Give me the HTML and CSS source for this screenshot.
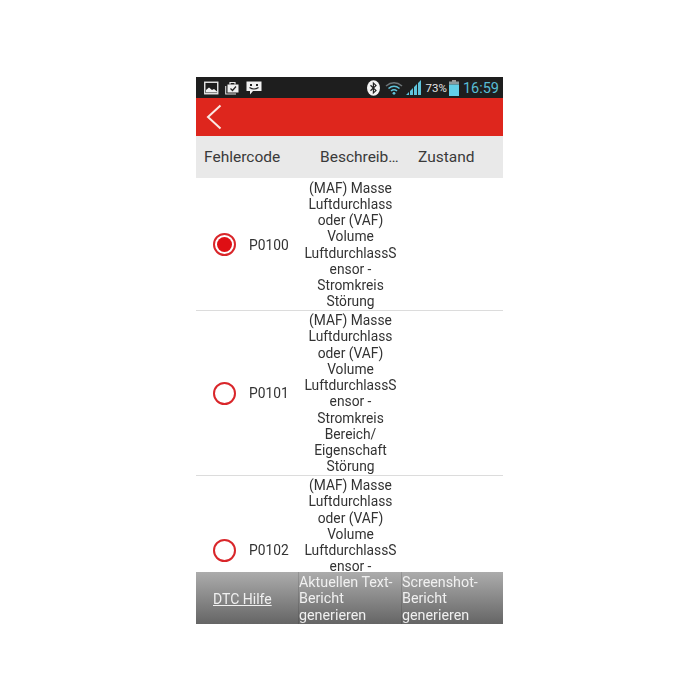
FILE: index.html
```html
<!DOCTYPE html>
<html lang="en">
<head>
	<meta charset="UTF-8">
	<title>Fehlercode</title>
	<link rel="stylesheet" href="styles.css">
</head>
<body>
	<div class="screen">
		<div class="status">
			<svg class="ico" width="15" height="14" viewBox="0 0 15 14">
				<rect x="0.75" y="1.25" width="13" height="11.5" fill="none" stroke="#e8e8e8" stroke-width="1.4"/>
				<path d="M2 11.5 L2 9 L5 6.5 L8 9 L10 8 L13 10.5 L13 11.5 Z" fill="#f2f2f2"/>
			</svg>
			<svg class="ico" width="15" height="14" viewBox="0 0 15 14">
				<path d="M5 3.5 V1.5 H10 V3.5" fill="none" stroke="#e8e8e8" stroke-width="1.2"/>
				<rect x="2.5" y="3.5" width="11" height="8" fill="#f0f0f0"/>
				<path d="M0.7 5 V13 H11" fill="none" stroke="#ddd" stroke-width="1.1"/>
				<path d="M5.5 7.5 L7.5 9.5 L11 5.5" fill="none" stroke="#222" stroke-width="1.2"/>
			</svg>
			<svg class="ico" width="16" height="14" viewBox="0 0 16 14">
				<path d="M0.5 0.5 H15.5 V10 H7 L4 13.5 V10 H0.5 Z" fill="#f2f2f2"/>
				<rect x="4" y="3" width="2" height="2" fill="#222"/>
				<rect x="10" y="3" width="2" height="2" fill="#222"/>
				<path d="M3.5 6.5 Q8 9.5 12.5 6.5" fill="none" stroke="#222" stroke-width="1.2"/>
			</svg>
			<div class="status-right">
				<svg width="15" height="16" viewBox="0 0 15 16">
					<ellipse cx="7.5" cy="8" rx="6.5" ry="7.8" fill="#f4f4f4"/>
					<path d="M4.5 5.2 L10 10.6 L7.4 13 V3 L10 5.4 L4.5 10.8" fill="none" stroke="#222" stroke-width="1.2"/>
				</svg>
				<svg class="wifi" width="18" height="14" viewBox="0 0 18 14">
					<path d="M1 5 Q9 -1.5 17 5" fill="none" stroke="#6d7478" stroke-width="1.6"/>
					<path d="M3.5 7.5 Q9 3 14.5 7.5" fill="none" stroke="#5fc4dc" stroke-width="1.6"/>
					<path d="M6 10 Q9 7.5 12 10" fill="none" stroke="#5fc4dc" stroke-width="1.6"/>
					<circle cx="9" cy="12.3" r="1.4" fill="#5fc4dc"/>
				</svg>
				<svg class="signal" width="16" height="15" viewBox="0 0 16 15">
					<path d="M0 15 L3 12 V15 Z M4 15 V11 L7 8 V15 Z M8 15 V7 L11 4 V15 Z M12 15 V3 L15 0 V15 Z" fill="#5fc4dc"/>
				</svg>
				<span class="pct">73%</span>
				<svg class="batt" width="10" height="16" viewBox="0 0 10 16">
					<rect x="3" y="0" width="4" height="2" fill="#9a9a9a"/>
					<rect x="0" y="1.5" width="10" height="3" fill="#8c9a9e"/>
					<rect x="0" y="4.5" width="10" height="11.5" fill="#62cfe8"/>
				</svg>
				<span class="clock">16:59</span>
			</div>
		</div>
		<div class="topbar">
			<svg width="16" height="26" viewBox="0 0 16 26">
				<path d="M14.5 1.5 L2 13 L14.5 24.5" fill="none" stroke="#fbe9e4" stroke-width="2"/>
			</svg>
		</div>
		<div class="tablehead">
			<div class="th-code">Fehlercode</div>
			<div class="th-desc">Beschreib…</div>
			<div class="th-state">Zustand</div>
		</div>
		<div class="list">
			<div class="row">
				<div class="radio on"></div>
				<div class="code">P0100</div>
				<div class="desc">(MAF) Masse Luftdurchlass oder (VAF) Volume LuftdurchlassSensor - Stromkreis Störung</div>
			</div>
			<div class="row">
				<div class="radio"></div>
				<div class="code">P0101</div>
				<div class="desc">(MAF) Masse Luftdurchlass oder (VAF) Volume LuftdurchlassSensor - Stromkreis Bereich/ Eigenschaft Störung</div>
			</div>
			<div class="row">
				<div class="radio"></div>
				<div class="code">P0102</div>
				<div class="desc">(MAF) Masse Luftdurchlass oder (VAF) Volume LuftdurchlassSensor - Stromkreis Niedrig Eingang</div>
			</div>
		</div>
		<div class="footer">
			<div class="btn btn-help"><span class="link">DTC Hilfe</span></div>
			<div class="btn btn-text">Aktuellen Text-Bericht generieren</div>
			<div class="btn btn-shot">Screenshot-Bericht generieren</div>
		</div>
	</div>
</body>
</html>
```

FILE: styles.css
```css
body{
	margin: 0;
	background: #fff;
	font-family: Roboto, "Liberation Sans", sans-serif;
	color: #333;
}
.screen{
	width: 307px;
	height: 547px;
	margin: 77px 0 0 196px;
	display: flex;
	flex-direction: column;
	overflow: hidden;
	filter: blur(0.35px);
}
.status{
	height: 21px;
	flex: none;
	background: #1e1e1e;
	display: flex;
	align-items: center;
	padding: 0 4px 0 8px;
}
.ico{
	margin-right: 6px;
}
.status-right{
	margin-left: auto;
	display: flex;
	align-items: center;
}
.wifi{
	margin-left: 4px;
}
.signal{
	margin-left: 3px;
}
.pct{
	font-size: 11.5px;
	color: #e4e4e4;
	margin-left: 4px;
}
.batt{
	margin-left: 2px;
}
.clock{
	font-size: 14.5px;
	color: #58bcd4;
	margin: 1px 0 0 4px;
}
.topbar{
	height: 38px;
	flex: none;
	background: #de261d;
	display: flex;
	align-items: center;
	padding-left: 10px;
}
.tablehead{
	height: 42px;
	flex: none;
	background: #e9e9e9;
	display: flex;
	align-items: center;
	font-size: 15.5px;
	color: #3a3a3a;
}
.th-code{
	width: 124px;
	padding-left: 8px;
	box-sizing: border-box;
}
.th-desc{
	width: 98px;
}
.list{
	flex: 1;
	min-height: 0;
	overflow: hidden;
}
.row{
	display: flex;
	align-items: center;
	border-bottom: 1px solid #dcdcdc;
	padding: 1.5px 0 0 17px;
}
.radio{
	width: 19px;
	height: 19px;
	flex: none;
	border: 2px solid #d9262a;
	border-radius: 50%;
	position: relative;
}
.radio.on::after{
	content: "";
	position: absolute;
	left: 2px;
	top: 2px;
	width: 15px;
	height: 15px;
	border-radius: 50%;
	background: #df0f14;
}
.code{
	width: 54px;
	flex: none;
	margin-left: 13px;
	font-size: 13.8px;
}
.desc{
	width: 95px;
	flex: none;
	text-align: center;
	font-size: 13.8px;
	line-height: 16.25px;
	overflow-wrap: anywhere;
}
.footer{
	height: 52px;
	flex: none;
	display: flex;
	background: linear-gradient(#acacac, #656565);
	color: #f0f0f0;
	font-size: 14.3px;
	line-height: 16.3px;
}
.btn{
	box-sizing: border-box;
	border-left: 1px solid rgba(0,0,0,.12);
	padding-top: 2px;
	overflow: hidden;
}
.btn-help{
	width: 102px;
	border-left: 0;
	padding: 2px 0 0 17px;
	display: flex;
	align-items: center;
	font-size: 14px;
}
.link{
	text-decoration: underline;
}
.btn-text{
	width: 103px;
}
.btn-shot{
	width: 102px;
}
```
